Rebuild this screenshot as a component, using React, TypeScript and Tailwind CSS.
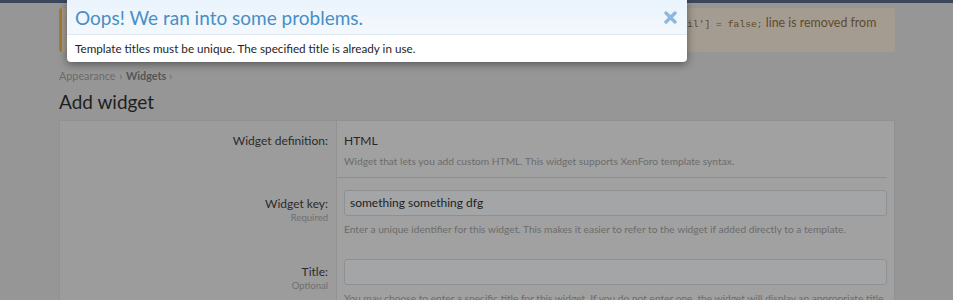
import React from "react";

const sans = { fontFamily: 'Lato, "Noto Sans", sans-serif' };

function CloseIcon() {
  return (
    <svg width="13" height="13" viewBox="0 0 13 13" aria-hidden="true">
      <path d="M2 2 L11 11 M11 2 L2 11" stroke="#8bb9df" strokeWidth="3.4" strokeLinecap="round" />
    </svg>
  );
}

function Row({
  label,
  hint,
  children,
  pt,
  lpt,
  pb = "pb-0",
}: {
  label: string;
  hint?: string;
  children: React.ReactNode;
  pt: string;
  lpt: string;
  pb?: string;
}) {
  return (
    <div className="flex">
      <div className={"w-[276px] shrink-0 bg-[#9c9c9c] pr-[8px] text-right " + lpt + " " + pb}>
        <div className="text-[12px] leading-[18px] text-[#2b2b2b]">{label}</div>
        {hint && <div className="text-[9.5px] leading-[10px] text-[#6f6f6f]">{hint}</div>}
      </div>
      <div className={"flex-1 border-l border-[#929292] " + pt + " " + pb}>{children}</div>
    </div>
  );
}

const desc = "text-[10.2px] leading-[16px] text-[#6c6c6c]";

export default function App() {
  return (
    <div className="relative h-[300px] w-[953px] overflow-hidden bg-[#969696]" style={sans}>
      <div className="h-[3px] bg-[#3b4759]" />
      <div className="px-[59px]">
        <div className="mt-[5px] h-[44px] w-[836px] rounded-[3px] border-l-[3px] border-[#a97b30] bg-[#a49c91] pt-[5px] pl-[625px] text-[12.4px] leading-[20px] text-[#5e4a2c]">
          <span className="text-[9.7px]" style={{ fontFamily: '"Liberation Mono", monospace' }}>
            il'] = false;
          </span>{" "}
          line is removed from
        </div>
        <div className="mt-[17px] text-[10.8px] leading-[14px] text-[#6a6a6a]">
          Appearance <span className="mx-[1px]">›</span> <span className="font-bold text-[#555]">Widgets</span>{" "}
          <span>›</span>
        </div>
        <div className="mt-[6px] text-[19px] leading-[26px] text-[#1f1f1f]">Add widget</div>
        <div className="mt-[5px] w-[836px] border border-[#919191] bg-[#a1a1a1]">
          <Row label="Widget definition:" pt="pt-[10px]" lpt="pt-[11px]">
            <div className="pl-[7px] text-[12px] leading-[20px] text-[#262626]">HTML</div>
            <div className={"pl-[7px] pt-[2px] " + desc}>
              Widget that lets you add custom HTML. This widget supports XenForo template syntax.
            </div>
            <div className="mt-[8px] mr-[7px] h-px bg-[#8d8d8d]" />
          </Row>
          <Row label="Widget key:" hint="Required" pt="pt-[12px]" lpt="pt-[17px]">
            <div className="px-[7px]">
              <div className="h-[26px] rounded-[3px] border border-[#8e9194] bg-[#a3a5a7] pl-[5px] text-[12px] leading-[24px] text-[#1f1f1f]">
                something something dfg
              </div>
              <div className={"mt-[5px] " + desc}>
                Enter a unique identifier for this widget. This makes it easier to refer to the widget if added directly to a template.
              </div>
            </div>
          </Row>
          <Row label="Title:" hint="Optional" pt="pt-[22px]" lpt="pt-[26px]" pb="pb-[20px]">
            <div className="px-[7px]">
              <div className="h-[26px] rounded-[3px] border border-[#8e9194] bg-[#a3a5a7]" />
              <div className={"mt-[5px] " + desc}>
                You may choose to enter a specific title for this widget. If you do not enter one, the widget will display an appropriate title.
              </div>
            </div>
          </Row>
        </div>
      </div>

      <div className="absolute left-[67px] top-0 w-[620px] overflow-hidden rounded-b-[4px] bg-white shadow-[0_2px_8px_rgba(0,0,0,0.45)]">
        <div className="flex h-[35px] items-center justify-between border-b border-[#dfe8f0] bg-gradient-to-b from-[#eaf4fc] to-[#f3f8fd] pl-[8px] pr-[10px]">
          <div className="pt-[2px] text-[19px] leading-[26px] text-[#4a8ec4]">Oops! We ran into some problems.</div>
          <CloseIcon />
        </div>
        <div className="h-[27px] pl-[8px] pt-[4px] text-[11.7px] leading-[18px] text-[#1e1e1e]">
          Template titles must be unique. The specified title is already in use.
        </div>
      </div>
    </div>
  );
}
